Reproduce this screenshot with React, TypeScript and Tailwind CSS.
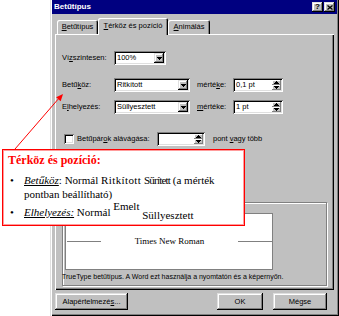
import React from 'react';

const raised =
  'shadow-[inset_-1px_-1px_#000,inset_1px_1px_#dfdfdf,inset_-2px_-2px_#808080,inset_2px_2px_#fff]';
const raisedThin = 'shadow-[inset_-1px_-1px_#808080,inset_1px_1px_#fff]';
const sunken =
  'shadow-[inset_1px_1px_#808080,inset_-1px_-1px_#fff,inset_2px_2px_#000,inset_-2px_-2px_#dfdfdf]';

const Tri = ({ up }: { up?: boolean }) => (
  <svg width="5" height="3" viewBox="0 0 5 3" shapeRendering="crispEdges">
    <polygon points={up ? '2.5,0 5,3 0,3' : '0,0 5,0 2.5,3'} fill="#000" />
  </svg>
);

const Combo = ({ value, width }: { value: string; width: string }) => (
  <div className={`${width} h-[14px] bg-white p-[2px] flex items-center ${sunken}`}>
    <span className="flex-1 pl-[1px] leading-none">{value}</span>
    <div className={`w-[10px] h-[10px] bg-[#c0c0c0] flex items-center justify-center ${raised}`}>
      <Tri />
    </div>
  </div>
);

const Spin = ({ value, width }: { value: string; width: string }) => (
  <div className={`${width} h-[14px] bg-white p-[2px] flex ${sunken}`}>
    <span className="flex-1 pl-[1px] flex items-center leading-none">{value}</span>
    <div className="w-[9px] flex flex-col">
      <div className={`h-[5px] bg-[#c0c0c0] flex items-center justify-center ${raisedThin}`}>
        <Tri up />
      </div>
      <div className={`h-[5px] bg-[#c0c0c0] flex items-center justify-center ${raisedThin}`}>
        <Tri />
      </div>
    </div>
  </div>
);

export default function App() {
  return (
    <div className="relative w-[339px] h-[316px] bg-white flex overflow-hidden font-['Liberation_Sans',Arial,sans-serif] text-[7.5px] text-black">
      <div className="w-[50px] shrink-0" />

      {/* dialog */}
      <div className="w-[289px] h-[316px] bg-[#c0c0c0] flex flex-col shadow-[inset_1px_0_#dfdfdf,inset_2px_0_#fff,inset_-1px_-1px_#000,inset_-2px_-2px_#808080]">
        {/* title bar */}
        <div className="mx-[2px] h-[14px] bg-[#000080] flex items-center pl-[2px] pr-[2px]">
          <span className="flex-1 text-white font-bold text-[8px] leading-none">Betűtípus</span>
          <div className={`w-[11px] h-[10px] bg-[#c0c0c0] flex items-center justify-center font-bold text-[8px] leading-none ${raised}`}>
            ?
          </div>
          <div className={`ml-[1px] w-[11px] h-[10px] bg-[#c0c0c0] flex items-center justify-center ${raised}`}>
            <svg width="6" height="5" viewBox="0 0 6 5">
              <path d="M0.5 0.5 L5.5 4.5 M5.5 0.5 L0.5 4.5" stroke="#000" strokeWidth="1.3" />
            </svg>
          </div>
        </div>

        {/* tabs */}
        <div className="mt-[4px] ml-[5px] h-[16px] flex items-end">
          <div className="ml-[2px] w-[41px] h-[14px] rounded-t-[2px] shadow-[inset_1px_1px_#fff,inset_-1px_0_#000,inset_-2px_0_#808080] flex items-center justify-center">
            <span>
              <u>B</u>etűtípus
            </span>
          </div>
          <div className="relative z-10 -mb-[1px] w-[70px] h-[17px] bg-[#c0c0c0] rounded-t-[2px] shadow-[inset_1px_1px_#fff,inset_-1px_0_#000,inset_-2px_0_#808080] flex items-center justify-center pb-[2px]">
            <span>
              <u>T</u>érköz és pozíció
            </span>
          </div>
          <div className="w-[42px] h-[14px] rounded-t-[2px] shadow-[inset_1px_1px_#fff,inset_-1px_0_#000,inset_-2px_0_#808080] flex items-center justify-center">
            <span>
              <u>A</u>nimálás
            </span>
          </div>
        </div>

        {/* panel */}
        <div className="ml-[5px] w-[279px] h-[256px] shadow-[inset_1px_1px_#fff,inset_-1px_-1px_#000,inset_-2px_-2px_#808080] flex flex-col pl-[7px]">
          <div className="mt-[17px] h-[14px] flex items-center">
            <span className="w-[52px]">
              Ví<u>z</u>szintesen:
            </span>
            <Combo value="100%" width="w-[52px]" />
          </div>

          <div className="mt-[13px] h-[14px] flex items-center">
            <span className="w-[52px]">
              Betű<u>k</u>öz:
            </span>
            <Combo value="Ritkított" width="w-[76px]" />
            <span className="ml-[7px] w-[36px]">
              mérté<u>k</u>e:
            </span>
            <Spin value="0,1 pt" width="w-[50px]" />
          </div>

          <div className="mt-[8px] h-[14px] flex items-center">
            <span className="w-[52px]">
              E<u>l</u>helyezés:
            </span>
            <Combo value="Süllyesztett" width="w-[76px]" />
            <span className="ml-[7px] w-[36px]">
              <u>m</u>értéke:
            </span>
            <Spin value="1 pt" width="w-[50px]" />
          </div>

          <div className="mt-[18px] h-[14px] flex items-center">
            <div className={`ml-[2px] w-[10px] h-[10px] bg-white ${sunken}`} />
            <span className="ml-[3px] w-[80px]">
              Betűpár<u>o</u>k alávágása:
            </span>
            <Spin value="" width="w-[48px]" />
            <span className="ml-[8px]">
              pont <u>v</u>agy több
            </span>
          </div>

          {/* Minta group */}
          <div className="mt-[56px] w-[265px] h-[84px] border border-[#808080] shadow-[inset_1px_1px_#fff,1px_1px_#fff] flex flex-col pl-[2px]">
            <div className="mt-[10px] w-[208px] h-[57px] bg-white border border-[#808080] flex items-center">
              <div className="ml-[1px] w-[34px] h-[1px] bg-[#808080]" />
              <span className="flex-1 text-center font-['Liberation_Serif','Times_New_Roman',serif] text-[9px]">
                Times New Roman
              </span>
              <div className="w-[34px] h-[1px] bg-[#808080]" />
            </div>
            <div className="mt-[2px] -ml-[3px] text-[7px] leading-[9px]">
              TrueType betűtípus. A Word ezt használja a nyomtatón és a képernyőn.
            </div>
          </div>
        </div>

        {/* buttons */}
        <div className="mt-[3px] ml-[5px] h-[17px] flex">
          <div className={`w-[73px] h-[17px] flex items-center justify-center ${raised}`}>
            <span>
              Alapértelmezé<u>s</u>...
            </span>
          </div>
          <div className={`ml-[89px] w-[46px] h-[17px] flex items-center justify-center ${raised}`}>OK</div>
          <div className={`ml-[10px] w-[54px] h-[17px] flex items-center justify-center ${raised}`}>Mégse</div>
        </div>
      </div>

      {/* callout overlay */}
      <div className="absolute left-[2px] top-[149px] w-[243px] h-[77px] bg-white border border-[#ff0000] shadow-[inset_0_0_0_1px_#ff9c9c] pl-[5px] pt-[2px] font-['Liberation_Serif','Times_New_Roman',serif] text-[11px] leading-[14px]">
        <div className="h-[16px] text-[12px] font-bold text-[#ff0000] leading-[16px]">Térköz és pozíció:</div>
        <div className="mt-[5px] flex">
          <span className="w-[16px] pl-[2px]">•</span>
          <div className="flex-1">
            <i className="underline">Betűköz</i>: Normál <span className="tracking-[0.4px]">Ritkított</span>{' '}
            <span className="tracking-[-0.8px]">Sűrített</span> (a mérték
            <br />
            pontban beállítható)
          </div>
        </div>
        <div className="mt-[4px] h-[14px] flex">
          <span className="w-[16px] pl-[2px]">•</span>
          <div className="flex-1 whitespace-nowrap">
            <i className="underline">Elhelyezés:</i> Normál <span className="relative -top-[6px]">Emelt</span>{' '}
            <span className="relative top-[3px]">Süllyesztett</span>
          </div>
        </div>
      </div>

      {/* arrow */}
      <svg className="absolute left-0 top-0 pointer-events-none" width="339" height="316" viewBox="0 0 339 316">
        <line x1="15" y1="149" x2="60" y2="97" stroke="#ff0000" strokeWidth="1" />
        <polygon points="63,94 60.7,101.3 56.1,97.3" fill="#ff0000" />
      </svg>
    </div>
  );
}
